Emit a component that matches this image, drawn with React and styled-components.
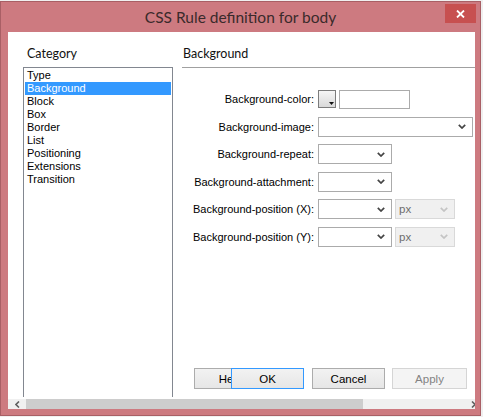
import React from "react";
import styled, { createGlobalStyle } from "styled-components";

const GlobalStyle = createGlobalStyle`
  html, body {
    margin: 0;
    padding: 0;
    background: #f0f0f0;
  }
  body {
    font-family: "Liberation Sans", Arial, sans-serif;
    font-size: 11px;
    color: #000;
  }
`;

const Window = styled.div`
  box-sizing: border-box;
  width: 481px;
  height: 415px;
  margin-top: 1px;
  border: 1px solid #a95f65;
  background: #cd7a80;
  display: flex;
  flex-direction: column;
  padding: 0 5px 6px 7px;
`;

const TitleBar = styled.div`
  position: relative;
  height: 30px;
  margin: 0 -5px 0 -7px;
  display: flex;
  align-items: center;
  justify-content: center;
  font-family: Lato, "Liberation Sans", sans-serif;
  font-size: 15.5px;
  color: #3a2a2b;
  padding-bottom: 1px;
  box-sizing: border-box;
`;

const CloseButton = styled.div`
  position: absolute;
  top: 2px;
  right: 4px;
  width: 31px;
  height: 19px;
  background: #c75050;
  display: flex;
  align-items: center;
  justify-content: center;
`;

const Client = styled.div`
  flex: 1;
  min-height: 0;
  background: #fff;
  display: flex;
  flex-direction: column;
  overflow: hidden;
`;

const Main = styled.div`
  flex: 1;
  min-height: 0;
  display: flex;
  padding-left: 15px;
  gap: 9px;
  overflow: hidden;
`;

const LeftColumn = styled.div`
  width: 150px;
  display: flex;
  flex-direction: column;
  padding-bottom: 2px;
`;

const RightColumn = styled.div`
  flex: 1;
  display: flex;
  flex-direction: column;
`;

const Header = styled.div`
  box-sizing: border-box;
  height: ${(p) => (p.$rule ? 36 : 35)}px;
  padding: 14px 0 0 ${(p) => p.$indent}px;
  font-family: Lato, "Liberation Sans", sans-serif;
  font-size: 12.5px;
  line-height: 16px;
  color: #111;
  border-bottom: ${(p) => (p.$rule ? "1px solid #a0a0a0" : "none")};
`;

const List = styled.div`
  flex: 1;
  border: 1px solid #828790;
  border-bottom: none;
  padding: 1px 1px 0 1px;
`;

const ListItem = styled.div`
  height: 13px;
  line-height: 13px;
  padding-left: 2px;
  background: ${(p) => (p.$selected ? "#3399ff" : "transparent")};
  color: ${(p) => (p.$selected ? "#fff" : "#000")};
`;

const Form = styled.div`
  display: grid;
  grid-template-columns: 132px 1fr;
  grid-auto-rows: 20px;
  column-gap: 4px;
  row-gap: 7.6px;
  padding-top: 21px;
`;

const Label = styled.div`
  text-align: right;
  align-self: center;
  white-space: nowrap;
`;

const Controls = styled.div`
  display: flex;
  align-items: center;
  gap: 3px;
`;

const Swatch = styled.div`
  box-sizing: border-box;
  width: 18px;
  height: 18px;
  border: 1px solid #7c7c7c;
  background: linear-gradient(#f6f6f6, #d9d9d9);
  display: flex;
  align-items: flex-end;
  justify-content: flex-end;
  padding: 0 1px 2px 0;
`;

const TextBox = styled.div`
  box-sizing: border-box;
  width: 71px;
  height: 19px;
  border: 1px solid #ababab;
  background: #fff;
`;

const SelectBox = styled.div`
  box-sizing: border-box;
  width: ${(p) => p.$w}px;
  height: 20px;
  border: 1px solid ${(p) => (p.$disabled ? "#d9d9d9" : "#ababab")};
  background: ${(p) => (p.$disabled ? "#f0f0f0" : "#fff")};
  color: #6d6d6d;
  display: flex;
  align-items: center;
  justify-content: space-between;
  padding: 0 6px 0 3px;
  font-size: 11.5px;
`;

const Spacer = styled.div`
  flex: 1;
`;

const ButtonRow = styled.div`
  display: flex;
  padding-left: 12px;
  margin-bottom: 10px;
`;

const Button = styled.div`
  box-sizing: border-box;
  position: relative;
  width: ${(p) => p.$w || 73}px;
  height: 21px;
  margin-left: ${(p) => p.$ml || 0}px;
  border: 1px solid ${(p) => (p.$focus ? "#3399ff" : p.$disabled ? "#d5d5d5" : "#acacac")};
  background: ${(p) =>
    p.$disabled ? "#f4f4f4" : "linear-gradient(#f2f2f2, #e6e6e6)"};
  color: ${(p) => (p.$disabled ? "#838383" : "#000")};
  display: flex;
  align-items: center;
  justify-content: center;
  font-size: 11.5px;
  z-index: ${(p) => (p.$focus ? 1 : 0)};
`;

const ScrollBar = styled.div`
  flex-shrink: 0;
  width: calc(100% + 7px);
  height: 10px;
  display: flex;
  background: #f0f0f0;
`;

const ScrollArrow = styled.div`
  width: 18px;
  display: flex;
  align-items: center;
  justify-content: center;
`;

const Thumb = styled.div`
  width: 337px;
  background: #cdcdcd;
`;

const Track = styled.div`
  flex: 1;
`;

const Chevron = ({ color = "#444" }) => (
  <svg width="8" height="5" viewBox="0 0 8 5">
    <path d="M0.8 0.8 L4 4 L7.2 0.8" fill="none" stroke={color} strokeWidth="1.7" />
  </svg>
);

const Select = ({ w, disabled, value }) => (
  <SelectBox $w={w} $disabled={disabled}>
    <span>{value}</span>
    <Chevron color={disabled ? "#c4c4c4" : "#444"} />
  </SelectBox>
);

const categories = [
  "Type",
  "Background",
  "Block",
  "Box",
  "Border",
  "List",
  "Positioning",
  "Extensions",
  "Transition",
];

export default function App() {
  return (
    <>
      <GlobalStyle />
      <Window>
        <TitleBar>
          CSS Rule definition for body
          <CloseButton>
            <svg width="9" height="8" viewBox="0 0 9 8">
              <path d="M1 0.5 L8 7.5 M8 0.5 L1 7.5" stroke="#fff" strokeWidth="1.8" />
            </svg>
          </CloseButton>
        </TitleBar>
        <Client>
          <Main>
            <LeftColumn>
              <Header $indent={4}>Category</Header>
              <List>
                {categories.map((c) => (
                  <ListItem key={c} $selected={c === "Background"}>
                    {c}
                  </ListItem>
                ))}
              </List>
            </LeftColumn>
            <RightColumn>
              <Header $rule $indent={1}>Background</Header>
              <Form>
                <Label>Background-color:</Label>
                <Controls>
                  <Swatch>
                    <svg width="5" height="3" viewBox="0 0 5 3">
                      <path d="M0 0 H5 L2.5 3 Z" fill="#111" />
                    </svg>
                  </Swatch>
                  <TextBox />
                </Controls>
                <Label>Background-image:</Label>
                <Controls>
                  <Select w={155} />
                </Controls>
                <Label>Background-repeat:</Label>
                <Controls>
                  <Select w={74} />
                </Controls>
                <Label>Background-attachment:</Label>
                <Controls>
                  <Select w={74} />
                </Controls>
                <Label>Background-position (X):</Label>
                <Controls>
                  <Select w={74} />
                  <Select w={60} disabled value="px" />
                </Controls>
                <Label>Background-position (Y):</Label>
                <Controls>
                  <Select w={74} />
                  <Select w={60} disabled value="px" />
                </Controls>
              </Form>
              <Spacer />
              <ButtonRow>
                <Button>Help</Button>
                <Button $focus $ml={-36}>OK</Button>
                <Button $ml={8}>Cancel</Button>
                <Button $ml={7} $w={75} $disabled>Apply</Button>
              </ButtonRow>
            </RightColumn>
          </Main>
          <ScrollBar>
            <ScrollArrow>
              <svg width="5" height="7" viewBox="0 0 5 7">
                <path d="M4 0.5 L1 3.5 L4 6.5" fill="none" stroke="#606060" strokeWidth="1.6" />
              </svg>
            </ScrollArrow>
            <Thumb />
            <Track />
            <ScrollArrow>
              <svg width="5" height="7" viewBox="0 0 5 7">
                <path d="M1 0.5 L4 3.5 L1 6.5" fill="none" stroke="#606060" strokeWidth="1.6" />
              </svg>
            </ScrollArrow>
          </ScrollBar>
        </Client>
      </Window>
    </>
  );
}
